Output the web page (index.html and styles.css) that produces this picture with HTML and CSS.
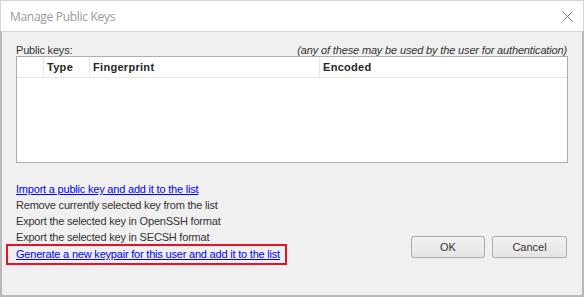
FILE: index.html
```html
<!DOCTYPE html>
<html lang="en">
<head>
  <meta charset="UTF-8">
  <title>Manage Public Keys</title>
  <link rel="stylesheet" href="styles.css">
</head>
<body>
  <div class="dialog">
    <div class="titlebar">
      <span class="title">Manage Public Keys</span>
      <svg class="close" width="11" height="11" viewBox="0 0 11 11">
        <path d="M0.5 0.5 L10.5 10.5 M10.5 0.5 L0.5 10.5" stroke="#7a7a7a" stroke-width="1" fill="none"/>
      </svg>
    </div>

    <div class="content">
      <div class="label-row">
        <span>Public keys:</span>
        <span class="hint">(any of these may be used by the user for authentication)</span>
      </div>

      <div class="listbox">
        <div class="list-header">
          <div class="col col-icon"></div>
          <div class="col col-type">Type</div>
          <div class="col col-finger">Fingerprint</div>
          <div class="col col-enc">Encoded</div>
        </div>
      </div>

      <div class="bottom">
        <div class="actions">
          <a href="#">Import a public key and add it to the list</a>
          <span>Remove currently selected key from the list</span>
          <span>Export the selected key in OpenSSH format</span>
          <span>Export the selected key in SECSH format</span>
          <span class="highlight"><a href="#">Generate a new keypair for this user and add it to the list</a></span>
        </div>
        <div class="buttons">
          <button class="ok">OK</button>
          <button>Cancel</button>
        </div>
      </div>
    </div>
  </div>
</body>
</html>
```

FILE: styles.css
```css
body {
  margin: 0;
  padding: 0;
  background: #ffffff;
  font-family: Tahoma, "Liberation Sans", Arial, sans-serif;
  font-size: 11px;
  letter-spacing: -0.2px;
  color: #333333;
}

.dialog {
  width: 584px;
  height: 297px;
  box-sizing: border-box;
  display: flex;
  flex-direction: column;
}

.titlebar {
  height: 31px;
  box-sizing: border-box;
  background: #ffffff;
  border: 1px solid #d4d4d4;
  border-bottom: none;
  display: flex;
  align-items: center;
  justify-content: space-between;
  padding: 0 10px 0 9px;
}

.title {
  font-family: "Open Sans", "Noto Sans", sans-serif;
  font-size: 12px;
  letter-spacing: -0.3px;
  color: #9a9a9a;
}

.close {
  display: block;
  margin-top: 1px;
}

.content {
  flex: 1;
  background: #f0f0f0;
  border-top: 1px solid #d4d4d4;
  border-left: 2px solid #b9b9b9;
  border-right: 2px solid #b9b9b9;
  border-bottom: 2px solid #b9b9b9;
  padding: 8px 14px 0 14px;
}

.label-row {
  display: flex;
  justify-content: space-between;
  align-items: flex-end;
  height: 16px;
  padding-right: 1px;
}

.hint {
  font-style: italic;
  letter-spacing: -0.15px;
}

.listbox {
  height: 107px;
  box-sizing: border-box;
  background: #ffffff;
  border: 1px solid #adadad;
}

.list-header {
  display: flex;
  height: 21px;
  box-sizing: border-box;
  border-bottom: 1px solid #e5e5e5;
}

.col {
  box-sizing: border-box;
  border-right: 1px solid #e5e5e5;
  font-weight: bold;
  letter-spacing: 0.3px;
  padding-left: 3px;
  line-height: 20px;
  color: #262626;
}

.col-icon { width: 27px; }
.col-type { width: 46px; }
.col-finger { width: 230px; }
.col-enc { flex: 1; border-right: none; }

.bottom {
  display: flex;
  justify-content: space-between;
  align-items: flex-end;
  margin-top: 18px;
}

.actions {
  display: flex;
  flex-direction: column;
  align-items: flex-start;
  line-height: 16px;
}

.actions a {
  color: #0000ff;
  text-decoration: underline;
}

.highlight {
  display: inline-block;
  border: 2px solid #e81123;
  padding: 0 5px 1px 8px;
  margin: -1px 0 -4px -10px;
}

.buttons {
  display: flex;
  gap: 7px;
  margin-bottom: 3px;
  padding-right: 1px;
}

.buttons button {
  width: 75px;
  height: 22px;
  box-sizing: border-box;
  border: 1px solid #acacac;
  border-radius: 2px;
  background: linear-gradient(#f2f2f2, #e5e5e5);
  font-family: inherit;
  font-size: 11px;
  letter-spacing: 0;
  color: #333333;
  padding: 0;
}

.buttons .ok {
  width: 74px;
}
```
